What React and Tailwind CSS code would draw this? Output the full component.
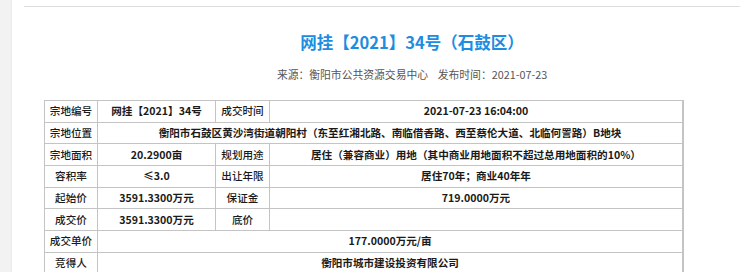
import React from "react";

const font = { fontFamily: '"Noto Sans CJK SC", "Noto Sans", sans-serif' };

function L({ children }) {
  return (
    <td className="border border-[#c4c4c4] text-center align-middle h-[21.67px] p-0 text-[#1a1a1a] font-medium">
      {children}
    </td>
  );
}
function V({ children, span }) {
  return (
    <td colSpan={span} className="border border-[#c4c4c4] text-center align-middle h-[21.67px] p-0 text-[#1a1a1a] font-bold">
      {children}
    </td>
  );
}

export default function App() {
  return (
    <div className="flex w-[740px] h-[272px] overflow-hidden bg-white" style={font}>
      <div className="w-[12px] shrink-0 bg-[#f2f2f2] border-r border-[#ebebeb]" />
      <div className="pl-[12px] shrink-0">
        <div className="w-[776px] pt-[6px]">
          <div className="h-px bg-[#dedede]" />
          <div className="mt-[23px] text-center text-[16.5px] leading-[24px] font-bold text-[#1c8de0]">
            网挂【2021】34号（石鼓区）
          </div>
          <div className="mt-[12px] text-center text-[10.8px] leading-[16px] text-[#555]">
            来源：衡阳市公共资源交易中心&nbsp;&nbsp;&nbsp;&nbsp;发布时间：2021-07-23
          </div>
          <table className="mt-[18px] ml-[20px] w-[640px] table-fixed border-collapse text-[10.6px] leading-[14px] border-r-2 border-[#c4c4c4]">
            <colgroup>
              <col className="w-[53px]" />
              <col className="w-[118px]" />
              <col className="w-[54px]" />
              <col />
            </colgroup>
            <tbody>
              <tr>
                <L>宗地编号</L>
                <V>网挂【2021】34号</V>
                <L>成交时间</L>
                <V>2021-07-23 16:04:00</V>
              </tr>
              <tr>
                <L>宗地位置</L>
                <V span={3}>衡阳市石鼓区黄沙湾街道朝阳村（东至红湘北路、南临借香路、西至蔡伦大道、北临何詈路）B地块</V>
              </tr>
              <tr>
                <L>宗地面积</L>
                <V>20.2900亩</V>
                <L>规划用途</L>
                <V>居住（兼容商业）用地（其中商业用地面积不超过总用地面积的10%）</V>
              </tr>
              <tr>
                <L>容积率</L>
                <V>≤3.0</V>
                <L>出让年限</L>
                <V>居住70年；商业40年年</V>
              </tr>
              <tr>
                <L>起始价</L>
                <V>3591.3300万元</V>
                <L>保证金</L>
                <V>719.0000万元</V>
              </tr>
              <tr>
                <L>成交价</L>
                <V>3591.3300万元</V>
                <L>底价</L>
                <V></V>
              </tr>
              <tr>
                <L>成交单价</L>
                <V span={3}>177.0000万元/亩</V>
              </tr>
              <tr>
                <L>竞得人</L>
                <V span={3}>衡阳市城市建设投资有限公司</V>
              </tr>
            </tbody>
          </table>
        </div>
      </div>
    </div>
  );
}
